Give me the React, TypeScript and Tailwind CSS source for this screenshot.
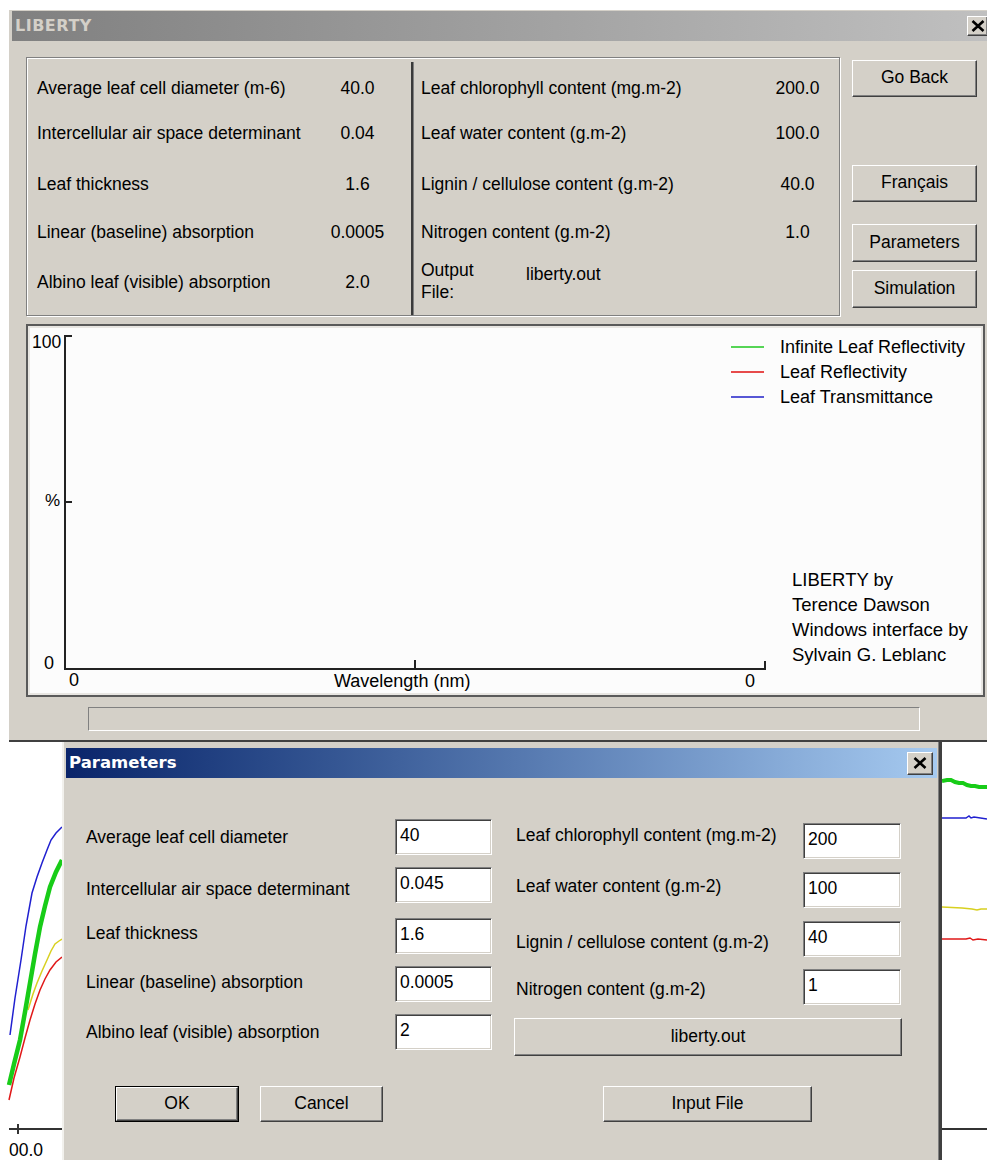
const sans = "font-['Liberation_Sans',Arial,sans-serif]";
const titleFont = "font-['DejaVu_Sans',Verdana,sans-serif] font-bold";

// classic 3D bevels
const raised =
  'bg-[#d4d0c8] border border-t-white border-l-white border-r-[#404040] border-b-[#404040] shadow-[inset_-1px_-1px_0_#808080]';
const field =
  'bg-white border border-t-[#808080] border-l-[#808080] border-r-white border-b-white shadow-[inset_1px_1px_0_#404040,inset_-1px_-1px_0_#d4d0c8]';

const mainLeft = [
  { label: 'Average leaf cell diameter (m-6)', value: '40.0', gap: 'mt-[15px]' },
  { label: 'Intercellular air space determinant', value: '0.04', gap: 'mt-[15px]' },
  { label: 'Leaf thickness', value: '1.6', gap: 'mt-[21px]' },
  { label: 'Linear (baseline) absorption', value: '0.0005', gap: 'mt-[18px]' },
  { label: 'Albino leaf (visible) absorption', value: '2.0', gap: 'mt-[20px]' },
];

const mainRight = [
  { label: 'Leaf chlorophyll content (mg.m-2)', value: '200.0', gap: 'mt-[15px]' },
  { label: 'Leaf water content (g.m-2)', value: '100.0', gap: 'mt-[15px]' },
  { label: 'Lignin / cellulose content (g.m-2)', value: '40.0', gap: 'mt-[21px]' },
  { label: 'Nitrogen content (g.m-2)', value: '1.0', gap: 'mt-[18px]' },
];

const dlgLeft = [
  { label: 'Average leaf cell diameter', value: '40', gap: 'mt-[41px]', lab: '' },
  { label: 'Intercellular air space determinant', value: '0.045', gap: 'mt-[12px]', lab: 'pt-[8px]' },
  { label: 'Leaf thickness', value: '1.6', gap: 'mt-[15px]', lab: 'pb-[6px]' },
  { label: 'Linear (baseline) absorption', value: '0.0005', gap: 'mt-[12px]', lab: 'pb-[4px]' },
  { label: 'Albino leaf (visible) absorption', value: '2', gap: 'mt-[12px]', lab: '' },
];

const dlgRight = [
  { label: 'Leaf chlorophyll content (mg.m-2)', value: '200', gap: 'mt-[45px]', lab: 'pb-[12px]' },
  { label: 'Leaf water content (g.m-2)', value: '100', gap: 'mt-[13px]', lab: 'pb-[8px]' },
  { label: 'Lignin / cellulose content (g.m-2)', value: '40', gap: 'mt-[13px]', lab: 'pt-[7px]' },
  { label: 'Nitrogen content (g.m-2)', value: '1', gap: 'mt-[12px]', lab: 'pt-[4px]' },
];

function CloseGlyph() {
  return (
    <svg width="14" height="12" viewBox="0 0 14 12">
      <path d="M1.5 1L12.5 11M12.5 1L1.5 11" stroke="#000" strokeWidth="2.6" />
    </svg>
  );
}

function Button({ children, className = '' }: { children: React.ReactNode; className?: string }) {
  return (
    <div className={`${raised} flex items-center justify-center pb-[2px] text-[17.5px] ${className}`}>
      {children}
    </div>
  );
}

function SpectrumChart() {
  return (
    <div className="relative w-[959px] h-[373px] mt-[8px] border-2 border-[#5a5a5a] bg-[#fcfcfc] shadow-[inset_0_0_0_2px_#e8e6e2] text-[18px]">
      <svg className="absolute inset-0" width="955" height="369">
        <g stroke="#222" strokeWidth="2" fill="none">
          <path d="M37 9V343H737V335" />
          <path d="M37 10H44M37 176H44M387 334V343" />
        </g>
        <path d="M703 21H736" stroke="#1fc81f" strokeWidth="1.6" />
        <path d="M703 46H736" stroke="#e01010" strokeWidth="1.6" />
        <path d="M703 71H736" stroke="#2020c8" strokeWidth="1.6" />
      </svg>
      <span className="absolute left-[4px] top-[6px] leading-[20px] text-[17.5px]">100</span>
      <span className="absolute left-[17px] top-[165px] leading-[20px] text-[17px]">%</span>
      <span className="absolute left-[16px] top-[327px] leading-[20px]">0</span>
      <span className="absolute left-[41px] top-[344px] leading-[20px]">0</span>
      <span className="absolute left-[306px] top-[345px] leading-[20px]">Wavelength (nm)</span>
      <span className="absolute left-[717px] top-[345px] leading-[20px]">0</span>
      <div className="absolute left-[752px] top-[9px] flex flex-col leading-[25px]">
        <span>Infinite Leaf Reflectivity</span>
        <span>Leaf Reflectivity</span>
        <span>Leaf Transmittance</span>
      </div>
      <div className="absolute left-[764px] top-[241px] flex flex-col leading-[25px] text-[18.5px]">
        <span>LIBERTY by</span>
        <span>Terence Dawson</span>
        <span>Windows interface by</span>
        <span>Sylvain G. Leblanc</span>
      </div>
    </div>
  );
}

function MainWindow() {
  return (
    <div className="mt-[10px] ml-[9px] w-[983px] pl-[3px] pr-[2px] pt-[1px] pb-[9px] bg-[#d4d0c8] border-b-2 border-[#404040]">
      <div className="flex items-center h-[30px] bg-gradient-to-r from-[#808080] to-[#c0c0c0]">
        <span className={`${titleFont} pl-[3px] text-[16px] text-[#d4d0c8] tracking-[0.5px]`}>LIBERTY</span>
        <div className={`${raised} ml-auto mr-[2px] w-[21px] h-[20px] flex items-center justify-center`}>
          <CloseGlyph />
        </div>
      </div>

      <div className="pl-[14px] pt-[16px]">
        <div className="flex">
          {/* current parameter values */}
          <div className="flex w-[814px] h-[259px] border border-[#808080] shadow-[inset_1px_1px_0_#fff,1px_1px_0_#fff] text-[17.5px]">
            <div className="w-[384px] pl-[10px]">
              {mainLeft.map((r) => (
                <div key={r.label} className={`flex items-center h-[30px] ${r.gap}`}>
                  <span className="w-[283px]">{r.label}</span>
                  <span className="w-[75px] text-center">{r.value}</span>
                </div>
              ))}
            </div>
            <div className="w-[3px] mt-[4px] border-l-2 border-[#3a3a3a] bg-[#808080]" />
            <div className="flex-1 pl-[7px]">
              {mainRight.map((r) => (
                <div key={r.label} className={`flex items-center h-[30px] ${r.gap}`}>
                  <span className="w-[339px]">{r.label}</span>
                  <span className="w-[75px] text-center">{r.value}</span>
                </div>
              ))}
              <div className="flex mt-[12px]">
                <span className="w-[105px] leading-[22px]">
                  Output
                  <br />
                  File:
                </span>
                <span className="mt-[4px] leading-[22px]">liberty.out</span>
              </div>
            </div>
          </div>

          <div className="ml-[12px] w-[125px] flex flex-col">
            <Button className="mt-[3px] h-[37px]">Go Back</Button>
            <Button className="mt-[68px] h-[37px]">Français</Button>
            <Button className="mt-[22px] h-[38px]">Parameters</Button>
            <Button className="mt-[8px] h-[38px]">Simulation</Button>
          </div>
        </div>

        <SpectrumChart />

        <div className="ml-[62px] mt-[10px] w-[832px] h-[24px] border border-t-[#808080] border-l-[#808080] border-r-white border-b-white" />
      </div>
    </div>
  );
}

function LeftStrip() {
  return (
    <div className="relative w-[62px] h-full bg-white">
      <svg className="absolute inset-0" width="62" height="418">
        <polyline points="10,293 15,256 21,218 26,184 32,151 37,135 42,121 47,108 51,98 56,91 62,85" fill="none" stroke="#2020d0" strokeWidth="1.5" />
        <polyline points="28,268 33,252 37,241 42,229 47,218 51,209 55,202 59,199 62,197" fill="none" stroke="#d8d020" strokeWidth="1.5" />
        <polyline points="9,343 14,322 20,298 25,270 30,241 35,212 40,185 45,164 50,145 56,130 62,118" fill="none" stroke="#18cc18" strokeWidth="4.5" />
        <polyline points="9,358 14,336 20,315 25,296 30,278 35,262 40,248 45,237 50,228 56,220 62,215" fill="none" stroke="#e01818" strokeWidth="1.5" />
        <path d="M9 387H62M18 382V392" stroke="#333" strokeWidth="2" fill="none" />
      </svg>
      <span className="absolute left-[9px] top-[398px] leading-[20px] text-[17.5px]">00.0</span>
    </div>
  );
}

function RightStrip() {
  return (
    <div className="relative w-[45px] h-full bg-white">
      <svg className="absolute inset-0" width="45" height="418">
        <polyline points="0,39 5,38 9,38 13,40 17,41 21,41 25,43 29,44 33,44 37,45 41,45 45,45" fill="none" stroke="#18cc18" strokeWidth="4" />
        <polyline points="0,76 24,76 27,74 29,76 32,75 45,77" fill="none" stroke="#2020d0" strokeWidth="1.5" />
        <polyline points="0,165 20,166 30,167 35,168 39,167 45,167" fill="none" stroke="#d8d020" strokeWidth="1.5" />
        <polyline points="0,197 24,197 28,196 31,198 36,197 45,198" fill="none" stroke="#e01818" strokeWidth="1.5" />
        <path d="M0 387H45" stroke="#333" strokeWidth="2" />
      </svg>
    </div>
  );
}

function ParamsDialog() {
  return (
    <div className="w-[880px] h-[418px] pt-[6px] bg-[#d4d0c8] border-l-2 border-l-[#f2f1ed] border-r-[3px] border-r-[#404040] shadow-[inset_-1px_0_0_#808080] text-[17.5px]">
      <div className="mx-[2px] h-[30px] flex items-center bg-gradient-to-r from-[#0a246a] to-[#a6caf0]">
        <span className={`${titleFont} pl-[3px] text-[16.5px] text-white`}>Parameters</span>
        <div className={`${raised} ml-auto mr-[4px] w-[26px] h-[23px] flex items-center justify-center`}>
          <CloseGlyph />
        </div>
      </div>

      <div className="flex">
        <div className="ml-[22px] w-[406px]">
          {dlgLeft.map((r) => (
            <div key={r.label} className={`flex items-center h-[36px] ${r.gap}`}>
              <span className={`flex-1 ${r.lab}`}>{r.label}</span>
              <div className={`${field} w-[97px] h-[36px] flex items-center pl-[4px] pb-[4px]`}>{r.value}</div>
            </div>
          ))}
        </div>
        <div className="ml-[22px] w-[388px]">
          {dlgRight.map((r) => (
            <div key={r.label} className={`flex items-center h-[36px] ${r.gap}`}>
              <span className={`flex-1 pl-[2px] ${r.lab}`}>{r.label}</span>
              <div className={`${field} w-[98px] h-[36px] mr-[1px] flex items-center pl-[4px] pb-[4px]`}>{r.value}</div>
            </div>
          ))}
          <Button className="mt-[13px] h-[38px]">liberty.out</Button>
        </div>
      </div>

      <div className="flex mt-[30px]">
        <div className="ml-[51px] w-[124px] h-[36px] border border-black">
          <div className={`${raised} w-full h-full flex items-center justify-center pb-[2px]`}>OK</div>
        </div>
        <Button className="ml-[21px] w-[123px] h-[36px]">Cancel</Button>
        <Button className="ml-[220px] w-[209px] h-[36px]">Input File</Button>
      </div>
    </div>
  );
}

export default function App() {
  return (
    <div className={`relative w-[987px] h-[1160px] overflow-hidden bg-white text-black ${sans}`}>
      <MainWindow />
      <div className="flex h-[418px]">
        <LeftStrip />
        <ParamsDialog />
        <RightStrip />
      </div>
    </div>
  );
}
